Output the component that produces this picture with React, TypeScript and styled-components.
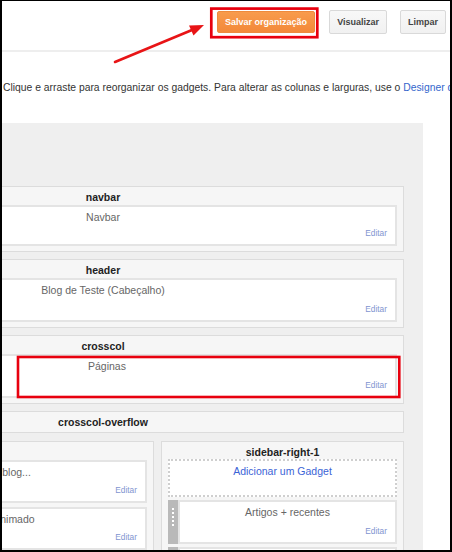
import styled, { createGlobalStyle } from 'styled-components';

const GlobalStyle = createGlobalStyle`
  html, body {
    margin: 0;
    padding: 0;
    background: #fff;
  }
  body {
    font-family: "Liberation Sans", Arial, sans-serif;
  }
`;

const Frame = styled.div`
  position: relative;
  box-sizing: border-box;
  width: 452px;
  height: 552px;
  border: 2px solid #000;
  border-top-width: 1px;
  overflow: hidden;
  background: #fff;
`;

const TopBar = styled.div`
  display: flex;
  justify-content: flex-end;
  align-items: flex-start;
  height: 51px;
  box-sizing: border-box;
  padding: 9px 4px 0 0;
  border-bottom: 2px solid #eeeeee;
`;

const Button = styled.button<{ primary?: boolean; space?: number }>`
  height: ${({ primary }) => (primary ? 22 : 24)}px;
  margin-top: ${({ primary }) => (primary ? 1 : 0)}px;
  margin-left: ${({ space }) => space ?? 0}px;
  padding: 0 7px;
  border-radius: 2px;
  font-family: "Liberation Sans", Arial, sans-serif;
  font-size: 9px;
  font-weight: bold;
  cursor: pointer;
  color: ${({ primary }) => (primary ? '#fff' : '#444')};
  border: 1px solid ${({ primary }) => (primary ? '#ee8a3c' : '#d9d9d9')};
  background: ${({ primary }) =>
    primary ? 'linear-gradient(#f89b4c, #f3893a)' : 'linear-gradient(#f8f8f8, #f1f1f1)'};
`;

const Intro = styled.p`
  margin: 29px 0 0 1px;
  font-size: 10.35px;
  line-height: 14px;
  color: #333;
  white-space: nowrap;
`;

const Link = styled.a`
  color: #3366cc;
  text-decoration: none;
`;

const Panel = styled.div`
  width: 641px;
  margin: 28px 0 0 -220px;
  padding: 63px 19px 40px 20px;
  box-sizing: border-box;
  background: #efefef;
  display: flex;
  flex-direction: column;
  gap: 7px;
`;

const Section = styled.div<{ empty?: boolean }>`
  border: 1px solid #dcdcdc;
  background: #f6f6f6;
  padding: 0 6px ${({ empty }) => (empty ? 6 : 5)}px;
  display: flex;
  flex-direction: column;
  gap: 4px;
  min-width: 0;
`;

const SectionTitle = styled.div`
  height: 18px;
  line-height: 20px;
  margin-bottom: -4px;
  text-align: center;
  font-size: 10.5px;
  font-weight: bold;
  color: #222;
  white-space: nowrap;
`;

const Columns = styled.div`
  display: flex;
  justify-content: flex-end;
  gap: 7px;
  margin-top: 1px;
`;

const Column = styled(Section)<{ width: number; tight?: boolean }>`
  width: ${({ width }) => width}px;
  box-sizing: border-box;
  height: 130px;
  gap: ${({ tight }) => (tight ? 3 : 4)}px;
`;

const Widget = styled.div<{ height: number }>`
  display: flex;
  height: ${({ height }) => height}px;
  flex-shrink: 0;
`;

const Handle = styled.div`
  width: 10px;
  flex-shrink: 0;
  background: #b9b9b9;
  display: flex;
  align-items: center;
  justify-content: center;
  padding-bottom: 10px;
  box-sizing: border-box;

  &::before {
    content: '';
    width: 2px;
    height: 18px;
    background: repeating-linear-gradient(to bottom, #fff 0 2px, transparent 2px 4px);
  }
`;

const WidgetBody = styled.div<{ indent?: number }>`
  flex: 1;
  min-width: 0;
  border: 2px solid #e4e4e4;
  background: #fff;
  padding: 3px 8px 5px ${({ indent }) => 8 + (indent ?? 0)}px;
  display: flex;
  flex-direction: column;
  justify-content: space-between;
`;

const WidgetName = styled.div`
  text-align: center;
  font-size: 10.5px;
  line-height: 14px;
  color: #666;
  white-space: nowrap;
`;

const EditLink = styled.a`
  align-self: flex-end;
  font-size: 8.3px;
  line-height: 12px;
  color: #7f95d0;
  text-decoration: none;
`;

const AddGadget = styled.div`
  height: 38px;
  box-sizing: border-box;
  border: 2px dotted #cfcfcf;
  background: #fff;
  text-align: center;
  font-size: 10.5px;
  line-height: 14px;
  padding-top: 3px;
  color: #3b63d6;
  flex-shrink: 0;
`;

const Overlay = styled.svg`
  position: absolute;
  left: -2px;
  top: -1px;
  pointer-events: none;
`;

type GadgetProps = {
  name: string;
  height: number;
  handle?: boolean;
  indent?: number;
};

const Gadget = ({ name, height, handle, indent }: GadgetProps) => (
  <Widget height={height}>
    {handle && <Handle />}
    <WidgetBody indent={indent}>
      <WidgetName>{name}</WidgetName>
      <EditLink href="#">Editar</EditLink>
    </WidgetBody>
  </Widget>
);

export default function App() {
  return (
    <>
      <GlobalStyle />
      <Frame>
        <TopBar>
          <Button primary>Salvar organização</Button>
          <Button space={14}>Visualizar</Button>
          <Button space={13}>Limpar</Button>
        </TopBar>

        <Intro>
          Clique e arraste para reorganizar os gadgets. Para alterar as colunas e larguras, use o{' '}
          <Link href="#">Designer de modelos</Link>.
        </Intro>

        <Panel>
          <Section>
            <SectionTitle>navbar</SectionTitle>
            <Gadget name="Navbar" height={41} />
          </Section>
          <Section>
            <SectionTitle>header</SectionTitle>
            <Gadget name="Blog de Teste (Cabeçalho)" height={44} />
          </Section>
          <Section>
            <SectionTitle>crosscol</SectionTitle>
            <Gadget name="Páginas" height={44} indent={8} />
          </Section>
          <Section empty>
            <SectionTitle>crosscol-overflow</SectionTitle>
          </Section>
          <Columns>
            <Column width={342}>
              <SectionTitle>main</SectionTitle>
              <Gadget name="Postagens no blog..." height={43} />
              <Gadget name="Texto rolante animado" height={43} />
            </Column>
            <Column width={243} tight>
              <SectionTitle>sidebar-right-1</SectionTitle>
              <AddGadget>Adicionar um Gadget</AddGadget>
              <Gadget name="Artigos + recentes" height={44} handle />
              <Gadget name="Arquivo do blog" height={44} handle />
            </Column>
          </Columns>
        </Panel>

        <Overlay width={452} height={552} viewBox="0 0 452 552">
          <rect x={211.3} y={8.6} width={106} height={28.6} fill="none" stroke="#e8000e" strokeWidth={2.7} />
          <rect x={18} y={357} width={381.3} height={40} fill="none" stroke="#e8000e" strokeWidth={2.6} />
          <line x1={115} y1={62} x2={192} y2={30} stroke="#e81416" strokeWidth={2.6} strokeLinecap="round" />
          <polygon points="204,25 189,25.6 193.5,35.5" fill="#e81416" />
        </Overlay>
      </Frame>
    </>
  );
}
